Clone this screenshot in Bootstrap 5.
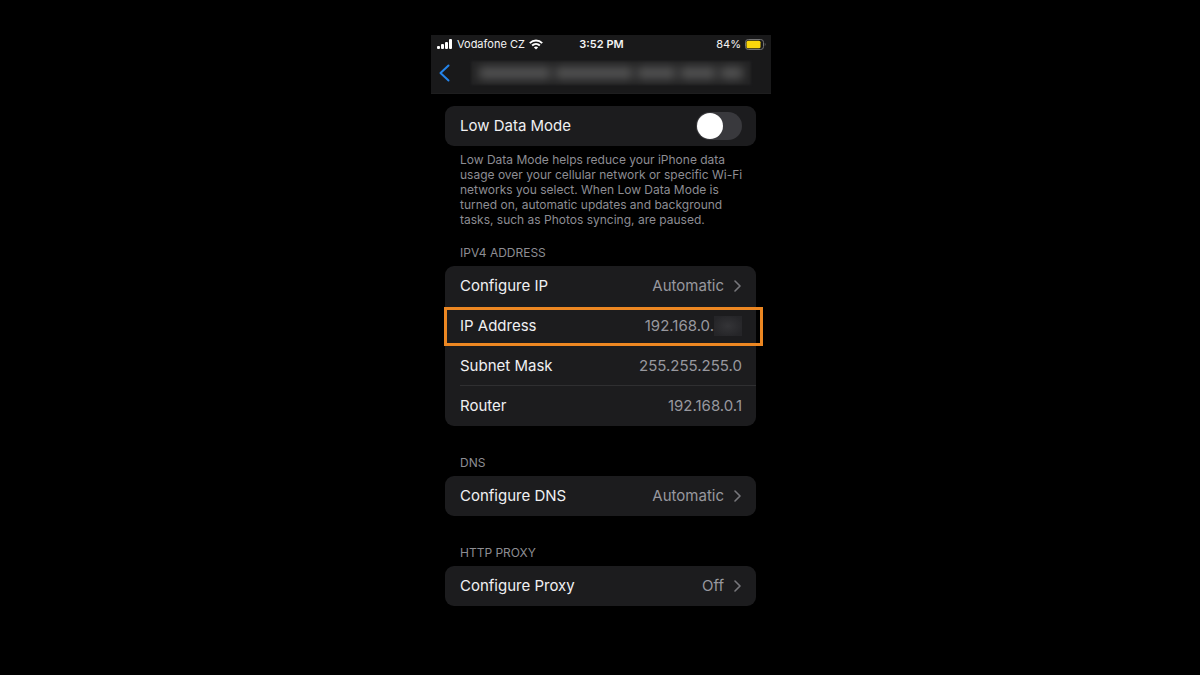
<!DOCTYPE html>
<html lang="en">
<head>
<meta charset="utf-8">
<meta name="viewport" content="width=device-width, initial-scale=1">
<title>Wi-Fi network settings</title>
<link rel="stylesheet" href="https://cdn.jsdelivr.net/npm/bootstrap@5.3.0/dist/css/bootstrap.min.css">
<style>
body{background:#000;color:#f0f0f2;font-family:Inter,"Liberation Sans",sans-serif;font-size:15px;line-height:20px}
.phone{max-width:340px}
.stage{padding:35px 0 35px 2px}
.top-bar{background:#19191a;border-bottom:1px solid #1e1e1f;color:#f4f4f4}
.status-row{display:grid;grid-template-columns:1fr auto 1fr;height:18px;padding:0 5px 0 6px;font-size:11px;line-height:18px}
.title-row{height:40px;padding:0 20px 0 8px}
.back-btn{width:32px;height:32px}
.hidden-title{background:#222223;height:24px;overflow:hidden;filter:blur(1px)}
.hidden-title i{background:#545454;height:12px;filter:blur(5px)}
.settings{padding:12px 15px 0 14px}
.group-box{--bs-list-group-bg:#1c1c1e;--bs-list-group-color:#f0f0f2;--bs-list-group-border-width:0;--bs-list-group-border-radius:9px;--bs-list-group-action-color:#f0f0f2;--bs-list-group-action-hover-bg:#2a2a2c;--bs-list-group-action-hover-color:#fff}
.setting{height:40px;padding:0 14px 0 15px;display:flex;align-items:center;justify-content:space-between}
.ruled::after{content:"";position:absolute;left:15px;right:0;bottom:0;height:1px;background:#2f2f31}
.value{color:#98989e}
.note{font-size:12px;line-height:15px;color:#8d8d93;padding:6px 8px 0 15px;margin-bottom:18px}
.group-title{font-size:12px;line-height:16px;color:#8d8d93;font-weight:400;padding:0 15px 5px;margin:0}
.spaced{margin-top:29px}
.highlight{position:absolute;z-index:3;top:1px;bottom:0;left:-1px;right:-7px;border:3px solid #ec8722}
.hidden-octet{width:28px;height:20px;background:radial-gradient(#343437,#252528 80%)}
.switch-input.form-check-input{width:46px;height:28px;margin:0;border:0;border-radius:14px;background:#39393d;position:relative}
.switch-input::before{content:"";position:absolute;left:1px;top:1px;width:26px;height:26px;border-radius:50%;background:#fff}
.switch-input.form-check-input:checked{background:#30d158}
.switch-input:checked::before{left:19px}
</style>
<script src="https://cdn.jsdelivr.net/npm/bootstrap@5.3.0/dist/js/bootstrap.bundle.min.js"></script>
</head>
<body>
<div class="stage">
<div class="phone mx-auto">
  <header class="top-bar">
    <div class="status-row">
      <div class="d-flex align-items-center">
        <svg width="16" height="11" viewBox="0 0 16 11" fill="#fff" aria-hidden="true"><rect x="0" y="7" width="3" height="3" rx="1"/><rect x="4" y="5" width="3" height="5" rx="1"/><rect x="8" y="3" width="3" height="7" rx="1"/><rect x="12" y="0" width="3" height="10" rx="1"/></svg>
        <span class="ms-1 me-1 text-nowrap">Vodafone CZ</span>
        <svg width="14" height="11" viewBox="0 0 14 11" fill="none" stroke="#fff" stroke-width="1.9" aria-hidden="true"><path d="M.8 4.1C4.3.7 9.7.7 13.2 4.1"/><path d="M3.1 6.5c2.2-2.1 5.6-2.1 7.8 0"/><path d="M7 10.5 4.9 8.4c1.2-1.1 3-1.1 4.2 0z" fill="#fff" stroke="none"/></svg>
      </div>
      <div class="fw-semibold">3:52 PM</div>
      <div class="d-flex align-items-center justify-content-end">
        <span>84%</span>
        <svg class="ms-1" width="21" height="11" viewBox="0 0 21 11" aria-hidden="true"><rect x=".5" y=".5" width="18" height="10" rx="2.8" fill="none" stroke="#747474"/><rect x="1.5" y="1.8" width="14" height="7.4" rx="1.5" fill="#fbd60b"/><path d="M19.8 3.8q1.4 1.7 0 3.4z" fill="#747474"/></svg>
      </div>
    </div>
    <div class="title-row d-flex align-items-center">
      <button class="btn p-0 border-0 d-flex align-items-center back-btn" type="button" aria-label="Back"><svg width="12" height="18" viewBox="0 0 12 18" fill="none" stroke="#2484ea" stroke-width="2" stroke-linecap="round" stroke-linejoin="round"><path d="M9.5 1.5 1.5 9l8 7.5"/></svg></button>
      <div class="hidden-title flex-fill d-flex align-items-center gap-1 px-2" aria-hidden="true"><i style="flex:74"></i><i style="flex:80"></i><i style="flex:40"></i><i style="flex:36"></i><i style="flex:24"></i></div>
    </div>
  </header>
  <main class="settings">
    <div class="list-group group-box">
      <div class="list-group-item setting"><label for="low-data">Low Data Mode</label><input class="form-check-input switch-input" type="checkbox" role="switch" id="low-data"></div>
    </div>
    <p class="note">Low Data Mode helps reduce your iPhone data usage over your cellular network or specific Wi-Fi networks you select. When Low Data Mode is turned on, automatic updates and background tasks, such as Photos syncing, are paused.</p>

    <h2 class="group-title">IPV4 ADDRESS</h2>
    <div class="list-group group-box">
      <button type="button" class="list-group-item list-group-item-action setting"><span>Configure IP</span><span class="value d-flex align-items-center">Automatic<svg class="ms-2" width="10" height="12" viewBox="0 0 10 12" fill="none" stroke="#77777c" stroke-width="1.6" stroke-linecap="round" stroke-linejoin="round" aria-hidden="true"><path d="M3 1l5 5-5 5"/></svg></span></button>
      <div class="list-group-item setting"><span>IP Address</span><span class="value d-flex align-items-center">192.168.0.<span class="hidden-octet"></span></span><span class="highlight"></span></div>
      <div class="list-group-item setting ruled"><span>Subnet Mask</span><span class="value">255.255.255.0</span></div>
      <div class="list-group-item setting"><span>Router</span><span class="value">192.168.0.1</span></div>
    </div>

    <h2 class="group-title spaced">DNS</h2>
    <div class="list-group group-box">
      <button type="button" class="list-group-item list-group-item-action setting"><span>Configure DNS</span><span class="value d-flex align-items-center">Automatic<svg class="ms-2" width="10" height="12" viewBox="0 0 10 12" fill="none" stroke="#77777c" stroke-width="1.6" stroke-linecap="round" stroke-linejoin="round" aria-hidden="true"><path d="M3 1l5 5-5 5"/></svg></span></button>
    </div>

    <h2 class="group-title spaced">HTTP PROXY</h2>
    <div class="list-group group-box">
      <button type="button" class="list-group-item list-group-item-action setting"><span>Configure Proxy</span><span class="value d-flex align-items-center">Off<svg class="ms-2" width="10" height="12" viewBox="0 0 10 12" fill="none" stroke="#77777c" stroke-width="1.6" stroke-linecap="round" stroke-linejoin="round" aria-hidden="true"><path d="M3 1l5 5-5 5"/></svg></span></button>
    </div>
  </main>
</div>
</div>
</body>
</html>
